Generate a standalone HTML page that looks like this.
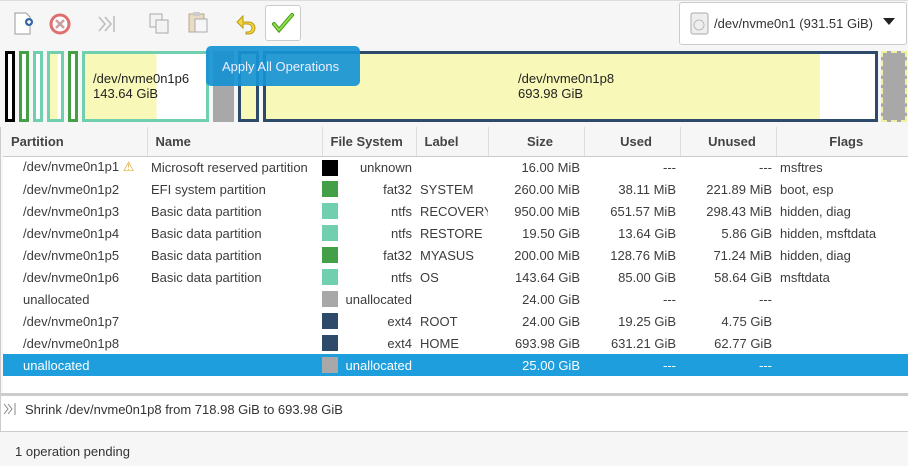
<!DOCTYPE html>
<html><head><style>
*{margin:0;padding:0;box-sizing:border-box}
body{width:908px;height:466px;background:#f6f6f6;font-family:"Liberation Sans",sans-serif;font-size:13px;color:#3c3c3c;position:relative;overflow:hidden}
.a{position:absolute}
.blk{position:absolute;top:51px;height:71px;border:3px solid}
table{border-collapse:collapse;position:absolute;left:3px;top:127px;width:905px;background:#fff;table-layout:fixed}
th{height:29px;font-weight:bold;text-align:left;padding-left:8px;border-right:1px solid #ddd;border-bottom:1px solid #ccc;background:#f6f6f6;color:#444;font-size:13px}
td{height:22px;white-space:nowrap;overflow:hidden;padding:0 4px}
.r{text-align:right}
td.fs{position:relative}
.sw{position:absolute;left:0;top:3px;width:16px;height:16px}
tr.sel td{background:#1f9ede;color:#fff}
</style></head><body>
<div class="a" style="left:0;top:0;width:908px;height:1px;background:#ddd"></div>
<svg class="a" style="left:12px;top:12px" width="24" height="24"><path d="M3 1h11l4 4v17H3z" fill="#fff" stroke="#999"/><circle cx="17" cy="10" r="4" fill="#3465a4"/><path d="M15 10h4M17 8v4" stroke="#fff" stroke-width="1.5"/></svg>
<svg class="a" style="left:48px;top:12px" width="24" height="24"><circle cx="12" cy="12" r="9" fill="#fff" stroke="#e07070" stroke-width="3"/><path d="M8 8l8 8M16 8l-8 8" stroke="#c8a0a0" stroke-width="2.5"/></svg>
<svg class="a" style="left:96px;top:12px" width="24" height="24"><path d="M3 5l6 7-6 7M9 5l6 7-6 7M18 4v16" stroke="#bbb" fill="none" stroke-width="1.5"/></svg>
<svg class="a" style="left:148px;top:11px" width="24" height="24"><rect x="2" y="3" width="12" height="13" fill="#f3f3f3" stroke="#aaa"/><rect x="8" y="9" width="12" height="13" fill="#f3f3f3" stroke="#aaa"/></svg>
<svg class="a" style="left:186px;top:10px" width="24" height="24"><rect x="3" y="4" width="15" height="18" fill="#e8dcc8" stroke="#b8a888"/><rect x="7" y="2" width="7" height="4" fill="#ccc"/><rect x="9" y="9" width="12" height="13" fill="#f6f6f6" stroke="#aaa"/></svg>
<svg class="a" style="left:234px;top:12px" width="24" height="24"><path d="M9 4L3 10l6 6V12h5a4 4 0 010 8h-2v2h3a6 6 0 000-12H9z" fill="#f5d442" stroke="#b89a10"/></svg>
<div class="a" style="left:265px;top:5px;width:36px;height:36px;border:1px solid #ccc;border-radius:3px;background:#fff"></div>
<svg class="a" style="left:271px;top:11px" width="24" height="24"><path d="M3 13l5 6L21 4" stroke="#4a9a1a" stroke-width="4" fill="none" stroke-linecap="round"/><path d="M3 13l5 6L21 4" stroke="#8ce04a" stroke-width="2" fill="none" stroke-linecap="round"/></svg>
<div class="a" style="left:679px;top:2px;width:228px;height:43px;border:1px solid #ccc;border-radius:3px;background:#fff"></div>
<svg class="a" style="left:690px;top:12px" width="20" height="24"><rect x="1" y="1" width="17" height="21" rx="2" fill="#eee" stroke="#aaa"/><circle cx="9" cy="13" r="5" fill="none" stroke="#bbb"/></svg>
<div class="a" style="left:714px;top:16px;font-size:13px;color:#333">/dev/nvme0n1 (931.51 GiB)</div>
<svg class="a" style="left:883px;top:18px" width="12" height="8"><path d="M0 0h12L6 7z" fill="#222"/></svg>
<div class="blk" style="left:5px;width:10px;border-color:#000;background:#fff"></div>
<div class="blk" style="left:19px;width:10px;border-color:#43a047;background:#fff"></div>
<div class="blk" style="left:33px;width:10px;border-color:#6fcfae;background:#fff"></div>
<div class="blk" style="left:47px;width:17px;border-color:#6fcfae;background:linear-gradient(90deg,#f8f8b8 70%,#fff 70%)"></div>
<div class="blk" style="left:68px;width:10px;border-color:#43a047;background:#fff"></div>
<div class="blk" style="left:82px;width:127px;border-color:#6fcfae;background:linear-gradient(90deg,#f8f8b8 59%,#fff 59%)"></div>
<div class="a" style="left:93px;top:71px;color:#222">/dev/nvme0n1p6<br>143.64 GiB</div>
<div class="a" style="left:213px;top:51px;width:21px;height:71px;background:#a8a8a8"></div>
<div class="blk" style="left:238px;width:21px;border-color:#2e4a6a;background:#f8f8b8"></div>
<div class="blk" style="left:263px;width:615px;border-color:#2e4a6a;background:linear-gradient(90deg,#f8f8b8 91%,#fff 91%)"></div>
<div class="a" style="left:518px;top:71px;color:#222">/dev/nvme0n1p8<br>693.98 GiB</div>
<div class="a" style="left:881px;top:51px;width:26px;height:71px;background:#a8a8a8;border:2px dashed #f0f0a0"></div>
<div class="a" style="left:206px;top:46px;width:154px;height:40px;background:rgba(22,146,212,.92);border-radius:5px;color:#eef;padding:13px 0 0 16px">Apply All Operations</div>
<table>
<colgroup><col style="width:144px"><col style="width:175px"><col style="width:94px"><col style="width:72px"><col style="width:96px"><col style="width:96px"><col style="width:96px"><col></colgroup>
<tr><th>Partition</th><th>Name</th><th>File System</th><th>Label</th><th style="text-align:center">Size</th><th style="text-align:center">Used</th><th style="text-align:center">Unused</th><th style="text-align:center;border-right:0">Flags</th></tr>
<tr><td style="padding-left:20px">/dev/nvme0n1p1 <span style="color:#e0a020">⚠</span></td><td>Microsoft reserved partition</td><td class="r fs"><span class="sw" style="background:#000"></span>unknown</td><td></td><td class="r">16.00 MiB</td><td class="r">---</td><td class="r">---</td><td>msftres</td></tr>
<tr><td style="padding-left:20px">/dev/nvme0n1p2</td><td>EFI system partition</td><td class="r fs"><span class="sw" style="background:#43a047"></span>fat32</td><td>SYSTEM</td><td class="r">260.00 MiB</td><td class="r">38.11 MiB</td><td class="r">221.89 MiB</td><td>boot, esp</td></tr>
<tr><td style="padding-left:20px">/dev/nvme0n1p3</td><td>Basic data partition</td><td class="r fs"><span class="sw" style="background:#6fcfae"></span>ntfs</td><td>RECOVERY</td><td class="r">950.00 MiB</td><td class="r">651.57 MiB</td><td class="r">298.43 MiB</td><td>hidden, diag</td></tr>
<tr><td style="padding-left:20px">/dev/nvme0n1p4</td><td>Basic data partition</td><td class="r fs"><span class="sw" style="background:#6fcfae"></span>ntfs</td><td>RESTORE</td><td class="r">19.50 GiB</td><td class="r">13.64 GiB</td><td class="r">5.86 GiB</td><td>hidden, msftdata</td></tr>
<tr><td style="padding-left:20px">/dev/nvme0n1p5</td><td>Basic data partition</td><td class="r fs"><span class="sw" style="background:#43a047"></span>fat32</td><td>MYASUS</td><td class="r">200.00 MiB</td><td class="r">128.76 MiB</td><td class="r">71.24 MiB</td><td>hidden, diag</td></tr>
<tr><td style="padding-left:20px">/dev/nvme0n1p6</td><td>Basic data partition</td><td class="r fs"><span class="sw" style="background:#6fcfae"></span>ntfs</td><td>OS</td><td class="r">143.64 GiB</td><td class="r">85.00 GiB</td><td class="r">58.64 GiB</td><td>msftdata</td></tr>
<tr><td style="padding-left:20px">unallocated</td><td></td><td class="r fs"><span class="sw" style="background:#a8a8a8"></span>unallocated</td><td></td><td class="r">24.00 GiB</td><td class="r">---</td><td class="r">---</td><td></td></tr>
<tr><td style="padding-left:20px">/dev/nvme0n1p7</td><td></td><td class="r fs"><span class="sw" style="background:#2e4a6a"></span>ext4</td><td>ROOT</td><td class="r">24.00 GiB</td><td class="r">19.25 GiB</td><td class="r">4.75 GiB</td><td></td></tr>
<tr><td style="padding-left:20px">/dev/nvme0n1p8</td><td></td><td class="r fs"><span class="sw" style="background:#2e4a6a"></span>ext4</td><td>HOME</td><td class="r">693.98 GiB</td><td class="r">631.21 GiB</td><td class="r">62.77 GiB</td><td></td></tr>
<tr class="sel"><td style="padding-left:20px">unallocated</td><td></td><td class="r fs"><span class="sw" style="background:#a8a8a8"></span>unallocated</td><td></td><td class="r">25.00 GiB</td><td class="r">---</td><td class="r">---</td><td></td></tr>
<tr><td colspan="8" style="height:17px"></td></tr>
</table>
<div class="a" style="left:0;top:127px;width:1px;height:266px;background:#ccc"></div>
<div class="a" style="left:0;top:393px;width:908px;height:3px;background:#ccc"></div>
<div class="a" style="left:0;top:396px;width:908px;height:36px;background:#fff;border-bottom:1px solid #ccc;border-left:1px solid #ccc"></div>
<svg class="a" style="left:3px;top:401px" width="16" height="16"><path d="M1 3l4 5-4 5M5 3l4 5-4 5M12 2v12" stroke="#888" fill="none"/></svg>
<div class="a" style="left:25px;top:402px;color:#333">Shrink /dev/nvme0n1p8 from 718.98 GiB to 693.98 GiB</div>
<div class="a" style="left:15px;top:444px;color:#333">1 operation pending</div>
</body></html>
